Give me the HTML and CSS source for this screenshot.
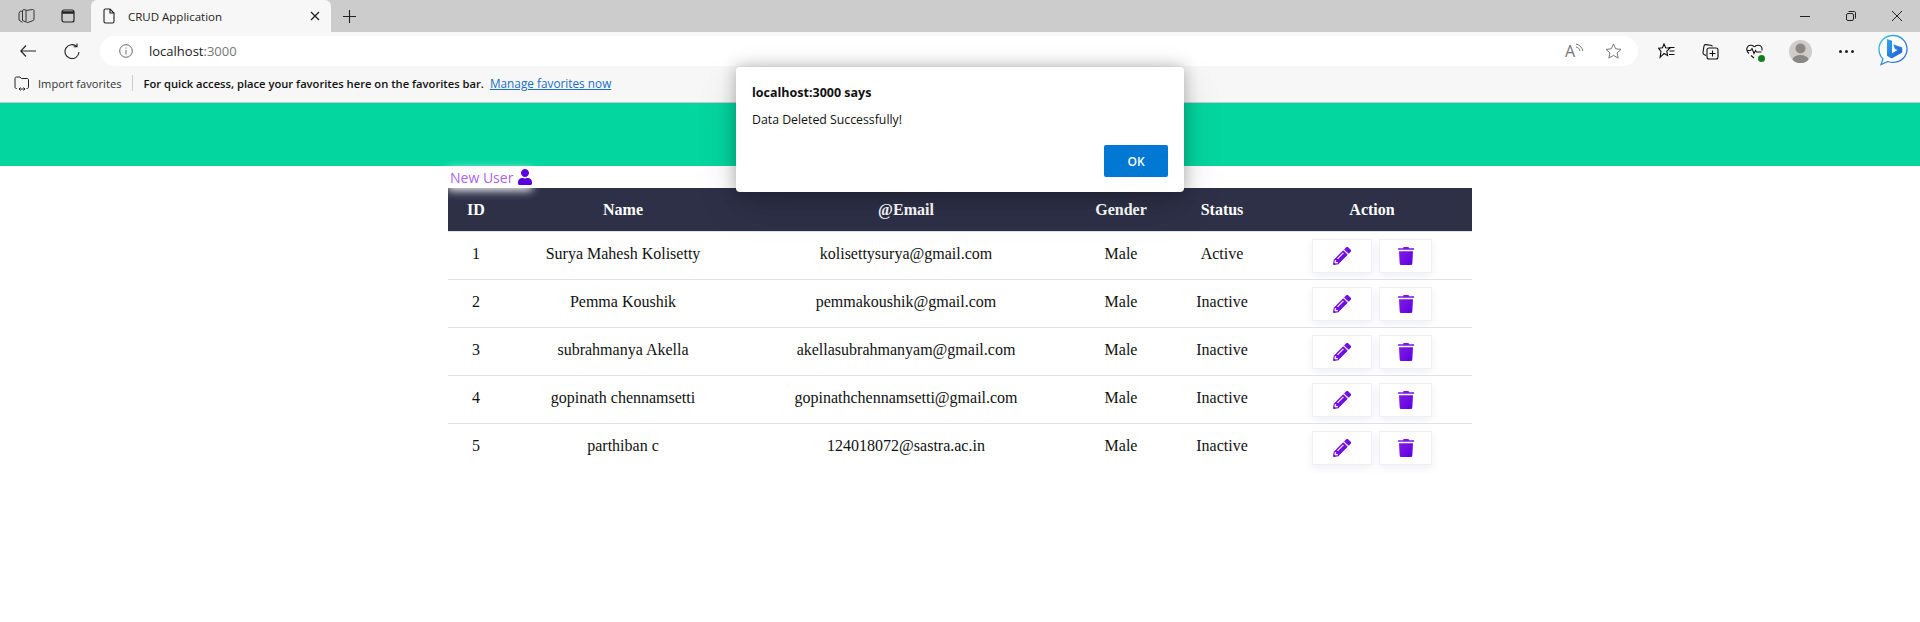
FILE: index.html
```html
<!DOCTYPE html>
<html lang="en">
<head>
  <meta charset="UTF-8" />
  <title>CRUD Application</title>
  <link rel="stylesheet" href="styles.css">
</head>
<body>

  <div class="browser">
    <div class="tabstrip">
      <span class="strip-icon">
        <svg width="17" height="16" viewBox="0 0 17 16" fill="none" stroke="#333" stroke-width="1"><path d="M8 2.500 14.500 1.500c.8-.1 1.500.4 1.500 1.200v8.500c0 .7-.3 1.100-1 1.400L10 14.500c-1 .3-2-.3-2-1.300z"/><path d="M8 2 5.500 1.500 4.500 3v9.500L8 14"/><path d="M4.500 3.500 2.500 3 1 5v7l3.500 2.500"/></svg>
      </span>
      <span class="strip-icon">
        <svg width="14" height="14" viewBox="0 0 14 14" fill="none" stroke="#222" stroke-width="1.200"><rect x="1" y="1" width="12" height="12" rx="2"/><path d="M1 3.500h12" stroke-width="2.500"/></svg>
      </span>
      <div class="tab">
        <svg width="12" height="16" viewBox="0 0 12 16" fill="none" stroke="#222" stroke-width="1.100"><path d="M1 2.500C1 1.500 1.500 1 2.500 1H7l4 4v8.500c0 1-.5 1.500-1.500 1.500h-7c-1 0-1.500-.5-1.500-1.500zM7 1v4h4"/></svg>
        <span class="tab-title">CRUD Application</span>
        <svg width="10" height="10" viewBox="0 0 10 10" stroke="#222" stroke-width="1.300"><path d="M1 1l8 8M9 1l-8 8"/></svg>
      </div>
      <svg class="new-tab" width="13" height="13" viewBox="0 0 13 13" stroke="#222" stroke-width="1.100"><path d="M6.500 0v13M0 6.500h13"/></svg>
      <div class="window-btns">
        <svg width="10" height="10" viewBox="0 0 10 10" stroke="#222" stroke-width="1"><path d="M0 5.500h10"/></svg>
        <svg width="10" height="10" viewBox="0 0 10 10" fill="none" stroke="#222" stroke-width="1"><rect x=".5" y="2.500" width="7" height="7" rx="1.500"/><path d="M2.500 .5h5.500c1 0 1.500 .5 1.500 1.500v5.500"/></svg>
        <svg width="10" height="10" viewBox="0 0 10 10" stroke="#222" stroke-width="1"><path d="M0 0l10 10M10 0 0 10"/></svg>
      </div>
    </div>

    <div class="toolbar">
      <svg class="nav-back" width="16" height="12" viewBox="0 0 16 12" fill="none" stroke="#222" stroke-width="1.100"><path d="M6 .5.800 6 6 11.500M.8 6H16"/></svg>
      <svg class="nav-reload" width="16" height="16" viewBox="0 0 16 16" fill="none" stroke="#222" stroke-width="1.100"><path d="M12.800 3.500A7 7 0 1 0 15 9"/><path d="M13 .5v3.300H9.700"/></svg>
      <div class="address">
        <svg width="14" height="14" viewBox="0 0 14 14" fill="none" stroke="#666" stroke-width="1"><circle cx="7" cy="7" r="6.300"/><path d="M7 6v4.500M7 3.500v1.200"/></svg>
        <span class="url">localhost<span class="url-port">:3000</span></span>
        <span class="address-end">
          <span class="read-aloud">A<svg width="9" height="9" viewBox="0 0 9 9" fill="none" stroke="#666" stroke-width=".9"><path d="M1 1c3 .5 6 3 7 7M1 4c2 .3 3.500 1.500 4 4"/></svg></span>
          <svg width="17" height="16" viewBox="0 0 17 16" fill="none" stroke="#777" stroke-width="1"><path d="M8.500 1l2.200 4.800 5.300.6-3.900 3.500 1.100 5.200-4.700-2.700-4.700 2.700 1.100-5.200L1 6.400l5.300-.6z"/></svg>
        </span>
      </div>
      <div class="tools">
        <span class="tool">
          <svg width="17" height="16" viewBox="0 0 17 16" fill="none" stroke="#111" stroke-width="1.100"><path d="M6 1l1.700 3.800 4 .5-2.900 2.800.8 4.400-3.600-2-3.900 3.800.9-5.800L.6 5.300l3.900-.5z"/><path d="M10.500 4.500h6M11.500 8h5M11 11.500h5.500"/></svg>
        </span>
        <span class="tool">
          <svg width="17" height="17" viewBox="0 0 17 17" fill="none" stroke="#111" stroke-width="1.100"><path d="M4 12.500 2 11.500c-.8-.4-1.100-1-1-2L2 3c.2-1 .8-1.500 1.800-1.400l5 .6c1 .1 1.500.7 1.500 1.300"/><rect x="5" y="5" width="11" height="11" rx="2"/><path d="M10.500 7.500v6M7.500 10.500h6"/></svg>
        </span>
        <span class="tool">
          <span class="health">
            <svg width="17" height="15" viewBox="0 0 17 15" fill="none" stroke="#111" stroke-width="1.100"><path d="M8.500 3C7 1 3.500 .5 1.800 2.500 0 4.700 1 7.500 3 9.500M8.500 3c1.500-2 5-2.500 6.700-.5 1 1.200 1 2.500.6 4M1 6.500h3.500l1.500-2 2 5 1.500-3 1 1.500h5M5 11.500l3 2.500"/></svg>
            <span class="health-dot"></span>
          </span>
        </span>
        <span class="tool tool-avatar">
          <span class="avatar">
            <svg width="23" height="23" viewBox="0 0 23 23"><circle cx="11.500" cy="8.500" r="5" fill="#8a8785"/><ellipse cx="11.500" cy="20" rx="8" ry="5" fill="#8a8785"/></svg>
          </span>
        </span>
        <span class="tool"><span class="more"><i></i><i></i><i></i></span></span>
        <span class="tool tool-bing">
          <svg width="30" height="32" viewBox="0 0 30 32">
            <defs>
              <linearGradient id="bingRing" x1="0" y1="0" x2="1" y2="1"><stop offset="0" stop-color="#35c1f1"/><stop offset="1" stop-color="#2b60dc"/></linearGradient>
              <linearGradient id="bingB" x1="0" y1="0" x2="1" y2="1"><stop offset="0" stop-color="#2fa8ee"/><stop offset="1" stop-color="#1f5bd0"/></linearGradient>
            </defs>
            <path d="M15 1.500C7 1.500 1 7.500 1 15c0 4 1.500 7.500 4 10l-2 5.500 7-3c1.600.6 3.300.9 5 .9 8 0 14-6 14-13.400S23 1.500 15 1.500z" fill="#fff" stroke="url(#bingRing)" stroke-width="1.300"/>
            <path d="M9 5l5 1.800v12.400l5.500-3.100-2.600-1.200-1.700-4.600 9 3.100v5l-10.500 6-4.700-2.600z" fill="url(#bingB)"/>
          </svg>
        </span>
      </div>
    </div>

    <div class="favbar">
      <svg width="16" height="15" viewBox="0 0 16 15" fill="none" stroke="#222" stroke-width="1"><path d="M3 12.500H2.500C1.500 12.500 1 12 1 11V2.500C1 1.500 1.500 1 2.500 1H6l1.500 1.500H13c1 0 1.500 .5 1.500 1.500v7c0 1-.5 1.500-1.500 1.500h-.5M5 13h6M5 13l1.500-1.500M5 13l1.500 1.500M11 13l-1.500-1.500M11 13l-1.500 1.500"/></svg>
      <span class="fav-import">Import favorites</span>
      <span class="fav-sep"></span>
      <span class="fav-hint">For quick access, place your favorites here on the favorites bar.</span>
      <a class="fav-link" href="#">Manage favorites now</a>
    </div>
  </div>

  <div class="banner"></div>

  <main class="content">
    <a class="new-user" href="#">New User
      <svg width="14" height="16" viewBox="0 0 448 512"><path fill="#5a00e0" d="M224 256c70.700 0 128-57.300 128-128S294.700 0 224 0 96 57.300 96 128s57.300 128 128 128zm89.600 32h-16.700c-22.200 10.200-46.900 16-72.900 16s-50.600-5.800-72.900-16h-16.700C60.200 288 0 348.200 0 422.400V464c0 26.500 21.500 48 48 48h352c26.500 0 48-21.500 48-48v-41.600c0-74.200-60.200-134.400-134.400-134.400z"/></svg>
    </a>

    <table class="users">
      <colgroup>
        <col class="col-id"><col class="col-name"><col class="col-email"><col class="col-gender"><col class="col-status"><col class="col-action">
      </colgroup>
      <thead>
        <tr><th>ID</th><th>Name</th><th>@Email</th><th>Gender</th><th>Status</th><th>Action</th></tr>
      </thead>
      <tbody id="rows"></tbody>
    </table>
  </main>

  <div class="dialog">
    <div class="dialog-title">localhost:3000 says</div>
    <div class="dialog-msg">Data Deleted Successfully!</div>
    <div class="dialog-actions"><button class="dialog-ok">OK</button></div>
  </div>

  <script>
    const users = [
      [1, "Surya Mahesh Kolisetty", "kolisettysurya@gmail.com", "Male", "Active"],
      [2, "Pemma Koushik", "pemmakoushik@gmail.com", "Male", "Inactive"],
      [3, "subrahmanya Akella", "akellasubrahmanyam@gmail.com", "Male", "Inactive"],
      [4, "gopinath chennamsetti", "gopinathchennamsetti@gmail.com", "Male", "Inactive"],
      [5, "parthiban c", "124018072@sastra.ac.in", "Male", "Inactive"]
    ];

    const pencil = `<svg width="18" height="18" viewBox="0 0 512 512"><path fill="url(#iconFill)" d="M497.900 142.100l-46.100 46.100c-4.700 4.700-12.300 4.700-17 0l-111-111c-4.700-4.700-4.700-12.300 0-17l46.100-46.100c18.700-18.700 49.100-18.700 67.900 0l60.100 60.100c18.800 18.700 18.800 49.100 0 67.900zM284.200 99.800L21.600 362.400.4 483.900c-2.900 16.400 11.400 30.600 27.800 27.800l121.500-21.300 262.600-262.600c4.700-4.700 4.700-12.300 0-17l-111-111c-4.800-4.700-12.400-4.700-17.100 0zM124.100 339.900c-5.500-5.500-5.500-14.300 0-19.800l154-154c5.500-5.500 14.300-5.500 19.800 0s5.500 14.300 0 19.800l-154 154c-5.500 5.500-14.300 5.500-19.800 0zM88 424h48v36.300l-64.500 11.300-31.100-31.100L51.700 376H88v48z"/></svg>`;
    const trash = `<svg width="16" height="18" viewBox="0 0 16 18"><path fill="url(#iconFill)" d="M5.500 0h5l.5 1.300h5v1.500H0V1.300h5zM1 4.200h14l-.7 12.300c-.1.900-.6 1.500-1.500 1.500H3.200c-.9 0-1.400-.6-1.500-1.500z"/></svg>`;

    document.getElementById("rows").innerHTML = users.map(u => `
      <tr>
        ${u.map(v => `<td class="cell">${v}</td>`).join("")}
        <td><div class="actions"><a class="act act-edit">${pencil}</a><a class="act act-del">${trash}</a></div></td>
      </tr>`).join("");
  </script>

  <svg class="defs" width="0" height="0">
    <defs>
      <linearGradient id="iconFill" x1="0" y1="0" x2="1" y2="1"><stop offset="0" stop-color="#8a1ee8"/><stop offset="1" stop-color="#5a00e0"/></linearGradient>
    </defs>
  </svg>

</body>
</html>
```

FILE: styles.css
```css
html, body {
  margin: 0;
  height: 100%;
  overflow: hidden;
  background: white;
}

body {
  position: relative;
  font-family: 'Liberation Serif', serif;
  color: #111;
}

/* browser chrome */
.browser {
  font-family: 'Open Sans', 'Noto Sans', sans-serif;
  height: 103px;
  background: #f7f7f7;
  box-sizing: border-box;
  box-shadow: inset 0 -1px 0 #c9c9c9;
}

.tabstrip {
  height: 32px;
  background: #cccccc;
  display: flex;
  align-items: center;
}

.strip-icon {
  width: 18px;
  display: flex;
  justify-content: center;
}

.strip-icon:nth-child(1) { margin-left: 17px; }
.strip-icon:nth-child(2) { margin-left: 24px; }

.tab {
  margin-left: 14px;
  width: 240px;
  height: 32px;
  box-sizing: border-box;
  background: #f7f7f7;
  border-radius: 6px 6px 0 0;
  display: flex;
  align-items: center;
  padding: 0 11px 0 12px;
}

.tab-title {
  flex: 1;
  margin-left: 13px;
  font-size: 11.500px;
  color: #222;
}

.new-tab {
  margin-left: 12px;
}

.window-btns {
  margin-left: auto;
  display: flex;
  gap: 36px;
  padding-right: 18px;
}

.toolbar {
  height: 38px;
  display: flex;
  align-items: center;
}

.nav-back { margin-left: 20px; }
.nav-reload { margin-left: 28px; }

.address {
  margin-left: 20px;
  width: 1538px;
  height: 30px;
  box-sizing: border-box;
  background: white;
  border-radius: 15px;
  display: flex;
  align-items: center;
  padding-left: 19px;
}

.url {
  margin-left: 16px;
  font-size: 13px;
  color: #222;
}

.url-port { color: #777; }

.address-end {
  margin-left: auto;
  display: flex;
  align-items: center;
  gap: 21px;
  padding-right: 16px;
}

.read-aloud {
  display: flex;
  align-items: flex-start;
  font-size: 16px;
  line-height: 17px;
  color: #777;
}

.tools {
  margin-left: 6px;
  display: flex;
  align-items: center;
}

.tool {
  width: 44px;
  display: flex;
  justify-content: center;
}

.tool-avatar { width: 48px; }

.tool-bing {
  width: 50px;
  margin-bottom: 2px;
}

.health {
  position: relative;
  display: flex;
}

.health-dot {
  position: absolute;
  right: -2px;
  bottom: -3px;
  width: 7px;
  height: 7px;
  border-radius: 50%;
  background: #13801f;
}

.avatar {
  width: 23px;
  height: 23px;
  border-radius: 50%;
  background: #cfccca;
  overflow: hidden;
  display: flex;
}

.more {
  display: flex;
  gap: 3px;
}

.more i {
  width: 3px;
  height: 3px;
  border-radius: 50%;
  background: #222;
}

.favbar {
  height: 26px;
  display: flex;
  align-items: center;
  padding-left: 14px;
  color: #111;
}

.fav-import {
  margin-left: 8px;
  font-size: 11.150px;
  color: #333;
}

.fav-sep {
  width: 1px;
  height: 16px;
  margin: 0 10px 0 11px;
  background: #ccc;
}

.fav-hint {
  font-size: 11.200px;
  font-weight: 600;
  color: #111;
}

.fav-link {
  margin-left: 6px;
  font-size: 11.800px;
  color: #1a6fc4;
}

/* page */
.banner {
  height: 63px;
  background: #04d69f;
}

.content {
  width: 1024px;
  margin: 0 auto;
}

.new-user {
  display: flex;
  align-items: center;
  gap: 5px;
  width: max-content;
  height: 22px;
  font-family: 'Open Sans', sans-serif;
  font-size: 14px;
  color: #a964ef;
  text-decoration: none;
  background: white;
  padding-left: 2px;
  box-shadow: 0 3px 8px rgba(255, 255, 255, 0.9);
  position: relative;
  z-index: 1;
}

.users {
  width: 100%;
  table-layout: fixed;
  border-collapse: collapse;
  font-size: 16px;
}

.col-id { width: 56px; }
.col-name { width: 238px; }
.col-email { width: 328px; }
.col-gender { width: 102px; }
.col-status { width: 100px; }
.col-action { width: 200px; }

.users th {
  height: 43px;
  padding: 0;
  background: #2d3047;
  color: white;
  font-weight: bold;
  border-bottom: 1px solid #e0e2e4;
}

.users td {
  height: 47px;
  padding: 0;
  text-align: center;
  border-bottom: 1px solid #e0e2e4;
}

.users td.cell {
  height: 43px;
  padding-bottom: 4px;
}

.users tr:last-child td {
  border-bottom: none;
}

.actions {
  display: flex;
  justify-content: center;
  gap: 7px;
}

.act {
  height: 34px;
  box-sizing: border-box;
  display: flex;
  align-items: center;
  justify-content: center;
  background: white;
  border: 1px solid #eef1f4;
  box-shadow: 0 3px 8px rgba(60, 70, 110, 0.08);
}

.act-edit { width: 60px; }
.act-del { width: 53px; }

.defs {
  position: absolute;
}

/* alert dialog */
.dialog {
  position: absolute;
  left: 736px;
  top: 67px;
  width: 448px;
  height: 125px;
  box-sizing: border-box;
  padding: 17px 16px 0;
  background: white;
  border-radius: 4px;
  box-shadow: 0 0 16px rgba(0, 0, 0, 0.28), 0 14px 40px rgba(0, 0, 0, 0.14);
  font-family: 'Open Sans', 'Noto Sans', sans-serif;
  color: #111;
}

.dialog-title {
  font-size: 12.500px;
  font-weight: 700;
  line-height: 18px;
}

.dialog-msg {
  margin-top: 10px;
  font-size: 12.300px;
  line-height: 16px;
}

.dialog-actions {
  display: flex;
  justify-content: flex-end;
  margin-top: 17px;
}

.dialog-ok {
  width: 64px;
  height: 32px;
  border: none;
  border-radius: 2px;
  background: #0078d4;
  color: white;
  font-family: inherit;
  font-size: 12px;
  font-weight: 600;
}
```
